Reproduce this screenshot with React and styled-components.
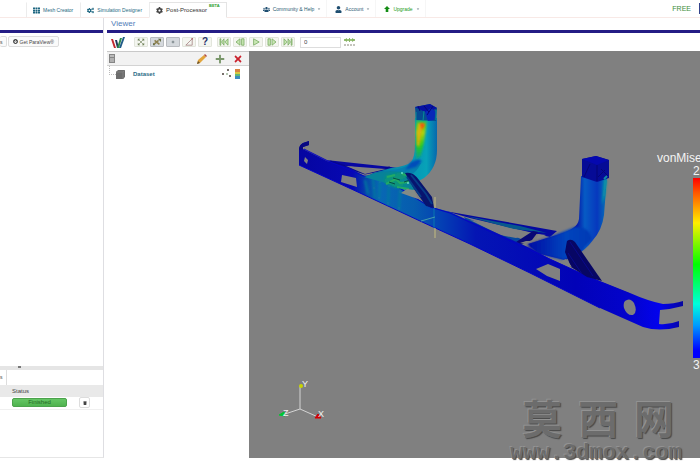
import React, { useState } from "react";
import styled, { createGlobalStyle } from "styled-components";
import {
  FaTh,
  FaCogs,
  FaCog,
  FaUsers,
  FaUser,
  FaArrowUp,
  FaCaretDown,
  FaArrowCircleDown,
  FaTrash,
  FaPlus,
  FaTimes,
} from "react-icons/fa";

const App = () => {
  return (
    <Page>
      <GlobalStyle />
      <Header />
      <Workspace>
        <Sidebar />
        <Viewer />
      </Workspace>
    </Page>
  );
};

export default App;

const Header = () => (
  <TopBar>
    <Tabs>
      <Tab href="#mesh">
        <FaTh /> Mesh Creator
      </Tab>
      <Tab href="#simulation">
        <FaCogs /> Simulation Designer
      </Tab>
      <Tab href="#post" $active>
        <FaCog /> Post-Processor
        <Beta>BETA</Beta>
      </Tab>
    </Tabs>
    <Menu>
      <MenuLink href="#community">
        <FaUsers /> Community & Help <Caret />
      </MenuLink>
      <MenuLink href="#account">
        <FaUser /> Account <Caret />
      </MenuLink>
      <MenuLink href="#upgrade" $green>
        <UpgradeIcon viewBox="0 0 7 7">
          <path d="M3.5 0L7 3.5H5V7H2V3.5H0z" />
        </UpgradeIcon>
        Upgrade <Caret />
      </MenuLink>
    </Menu>
    <Plan>FREE</Plan>
    <Avatar />
  </TopBar>
);

const Sidebar = () => (
  <Aside>
    <PanelTitle />
    <SideTools>
      <SideButton aria-label="Previous">s</SideButton>
      <SideButton>
        <FaArrowCircleDown /> Get ParaView®
      </SideButton>
    </SideTools>
    <Splitter>
      <SplitHandle />
    </Splitter>
    <JobTabs>
      <JobTab aria-label="Jobs">s</JobTab>
    </JobTabs>
    <JobTable>
      <thead>
        <tr>
          <th>Status</th>
          <th aria-label="Actions" />
        </tr>
      </thead>
      <tbody>
        <tr>
          <td>
            <Status>Finished</Status>
          </td>
          <td>
            <DeleteButton aria-label="Delete job">
              <FaTrash />
            </DeleteButton>
          </td>
        </tr>
      </tbody>
    </JobTable>
  </Aside>
);

const Viewer = () => {
  const [frame, setFrame] = useState("0");

  return (
    <Main>
      <PanelTitle>Viewer</PanelTitle>
      <Toolbar>
        <Logo viewBox="0 0 14 12">
          <path d="M0 2h2l3 9H3z" fill="#c22a30" />
          <path d="M4 3h2l2 8H6z" fill="#26365c" />
          <path d="M9 1h2L8 11H6z" fill="#2f8a4c" />
          <path d="M12 0h2l-4 11H8z" fill="#205c88" />
        </Logo>
        <ToolGroup>
          <Tool aria-label="Reset camera">
            <svg viewBox="0 0 12 10">
              <path d="M3 2l6 6M9 2L3 8" stroke="#8a9878" />
              <path
                d="M2 1h3L2 4zM10 1v3L7 1zM2 9V6l3 3zM10 9H7l3-3z"
                fill="#71825a"
              />
            </svg>
          </Tool>
          <Tool aria-label="Toggle rotation center" $pressed>
            <svg viewBox="0 0 12 10">
              <path
                d="M2 8l6-5M3 3l6 5"
                stroke="#8d8150"
                strokeWidth="2"
              />
              <path d="M7 1h4v4zM1 9V6l3 3z" fill="#687047" />
            </svg>
          </Tool>
          <Tool aria-label="Pick center" $pressed>
            <svg viewBox="0 0 12 10">
              <path d="M4 5h4M6 3v4" stroke="#969d9f" />
              <circle cx="6" cy="5" r="1" fill="#68747b" />
            </svg>
          </Tool>
          <Tool aria-label="Measure">
            <svg viewBox="0 0 12 10">
              <path d="M2 9l8-8v8z" fill="none" stroke="#a58183" />
              <path d="M9 0h2v2H9z" fill="#b06870" />
            </svg>
          </Tool>
          <Tool aria-label="Help">
            <HelpMark>?</HelpMark>
          </Tool>
        </ToolGroup>
        <ToolGroup>
          {playback.map(({ label, path }) => (
            <Tool aria-label={label} key={label}>
              <svg viewBox="0 0 12 10">
                <path d={path} fill="#c9e8b4" stroke="#79aa62" />
              </svg>
            </Tool>
          ))}
        </ToolGroup>
        <FrameInput
          aria-label="Frame"
          value={frame}
          onChange={(e) => setFrame(e.target.value)}
        />
        <Rescale viewBox="0 0 11 9">
          <path d="M0 2h11" stroke="#9cc47a" strokeWidth="2" />
          <path d="M0 2l3-2v4zM11 2L8 0v4zM5 0h1v4H5z" fill="#8ab568" />
          <path d="M0 7h11" stroke="#8a8a7a" strokeDasharray="2 1" />
        </Rescale>
      </Toolbar>
      <Content>
        <TreePanel>
          <TreeTools>
            <ServerIcon viewBox="0 0 6 9">
              <path d="M0 0h6v9H0z" fill="#858585" />
              <path d="M1 2h4" stroke="#eee" />
              <path d="M1 4h4v4H1z" fill="#b0b0b0" />
            </ServerIcon>
            <TreeButton aria-label="Edit">
              <svg viewBox="0 0 10 10">
                <path d="M0 10l1-4 6-5 2 2-6 6z" fill="#e2a53c" />
                <path d="M7 1l1-1 2 2-1 1z" fill="#b04a44" />
                <path d="M0 10l1-3 2 2z" fill="#66512f" />
              </svg>
            </TreeButton>
            <TreeButton aria-label="Add" $color="#79966a">
              <FaPlus />
            </TreeButton>
            <TreeButton aria-label="Remove" $color="#c9202c">
              <FaTimes />
            </TreeButton>
          </TreeTools>
          <TreeRow>
            <Branch />
            <DatasetIcon viewBox="0 0 9 9">
              <path d="M2 0h7v7L7 9H0V2z" fill="#6d6d6d" />
              <path d="M0 2h7v7M7 2l2-2" fill="none" stroke="#808080" />
            </DatasetIcon>
            <DatasetName>Dataset</DatasetName>
            <RowIcon viewBox="0 0 18 10">
              <g fill="#4a3f3a">
                <circle cx="1" cy="5" r="1" />
                <circle cx="6" cy="1" r="1" />
                <circle cx="8" cy="7" r="1" />
              </g>
              <circle cx="5" cy="5" r="1" fill="#9fb99a" />
              <path d="M13 0h5v3h-5z" fill="#d98442" />
              <path d="M13 3h5v2h-5z" fill="#d5ca42" />
              <path d="M13 5h5v2h-5z" fill="#62ba76" />
              <path d="M13 7h5v3h-5z" fill="#3c8dc0" />
            </RowIcon>
          </TreeRow>
        </TreePanel>
        <Viewport>
          <Model />
          <Legend>
            <LegendTitle>vonMises</LegendTitle>
            <span>2</span>
            <ColorBar />
            <span>3</span>
          </Legend>
          <Watermark>
            <WatermarkName>
              <span>莫</span>
              <span>西</span>
              <span>网</span>
            </WatermarkName>
            <WatermarkUrl>www.3dmox.com</WatermarkUrl>
          </Watermark>
        </Viewport>
      </Content>
    </Main>
  );
};

const playback = [
  { label: "First frame", path: "M1 1h1v8H1zM6 1v8L3 5zM11 1v8L7 5z" },
  { label: "Previous frame", path: "M6 1v8L1 5zM8 1h3v8H8z" },
  { label: "Play", path: "M3 1l7 4-7 4z" },
  { label: "Next frame", path: "M1 1h3v8H1zM6 1v8l5-4z" },
  { label: "Last frame", path: "M1 1v8l4-4zM6 1v8l3-4zM10 1h1v8h-1z" },
];

const Model = () => (
  <Scene viewBox="249 51 451 407" preserveAspectRatio="xMinYMin meet">
    <defs>
      <linearGradient id="beam" gradientUnits="userSpaceOnUse" x1="299" y1="0" x2="683" y2="0">
        <stop offset="0" stopColor="#0505a0" />
        <stop offset="0.14" stopColor="#0708b4" />
        <stop offset="0.18" stopColor="#064ba8" />
        <stop offset="0.21" stopColor="#0868b4" />
        <stop offset="0.3" stopColor="#065cae" />
        <stop offset="0.37" stopColor="#0440b4" />
        <stop offset="0.46" stopColor="#0415b4" />
        <stop offset="0.72" stopColor="#0202b8" />
        <stop offset="0.86" stopColor="#0303cc" />
        <stop offset="0.94" stopColor="#0202ee" />
        <stop offset="1" stopColor="#0606a0" />
      </linearGradient>
      <linearGradient id="tubeLeft" x1="0" y1="0" x2="1" y2="0">
        <stop offset="0" stopColor="#0647a8" />
        <stop offset="0.35" stopColor="#0788a5" />
        <stop offset="0.65" stopColor="#0795b4" />
        <stop offset="0.86" stopColor="#07a2b8" />
        <stop offset="1" stopColor="#0568ae" />
      </linearGradient>
      <linearGradient id="stress" x1="0" y1="0" x2="0" y2="1">
        <stop offset="0" stopColor="#08a690" />
        <stop offset="0.2" stopColor="#54d817" />
        <stop offset="0.35" stopColor="#b8cf06" />
        <stop offset="0.65" stopColor="#2bcc22" />
        <stop offset="1" stopColor="#07988c" />
      </linearGradient>
      <linearGradient id="tubeRight" gradientUnits="userSpaceOnUse" x1="577" y1="0" x2="608" y2="0">
        <stop offset="0" stopColor="#0618a8" />
        <stop offset="0.25" stopColor="#065bc4" />
        <stop offset="0.65" stopColor="#0638be" />
        <stop offset="1" stopColor="#067ab4" />
      </linearGradient>
      <linearGradient id="elbowRight" x1="0" y1="0" x2="1" y2="0">
        <stop offset="0" stopColor="#060aa4" />
        <stop offset="0.6" stopColor="#0545bd" />
        <stop offset="1" stopColor="#0538b4" />
      </linearGradient>
      <filter id="soft" x="-50%" y="-50%" width="200%" height="200%">
        <feGaussianBlur stdDeviation="1" />
      </filter>
    </defs>

    {/* left cross rods */}
    <path d="M326 160L391 167 403 169 390 172 340 165z" fill="#0808a2" />
    <path d="M330 162l35 11 25-5" fill="none" stroke="#06068e" strokeWidth="3" />
    <path d="M346 166l40 3-21 5z" fill="#808080" />

    {/* left tube */}
    <path
      d="M415 118L437 118 437 150Q437 168 424 178L408 187 395 190 362 180 373 173 391 168Q407 166 411 162 415 157 415 145z"
      fill="url(#tubeLeft)"
    />
    <path d="M411 163Q404 169 391 170L372 175 388 181Q414 180 421 163z" fill="#067fae" />
    <path d="M411 162l7-3 4 2-6 6-11 3z" fill="#054eba" filter="url(#soft)" />
    <path d="M416 118l11 2-3 22-3 14-5 4z" fill="url(#stress)" filter="url(#soft)" />
    <path d="M418 123l7 1-4 8-2 15-2-2z" fill="#e0ae08" filter="url(#soft)" />
    <path d="M420 123l5 1-3 6z" fill="#ef4809" filter="url(#soft)" />
    <path d="M415 107l15-3 7 4-1 13-20-1z" fill="#064b91" />
    <path d="M415 107l15-3 7 4-10 5z" fill="#0710a3" />
    <path d="M425 112l6-4 5 4-2 8-6 1z" fill="#0828b8" />
    <path d="M416 112v8M424 111l-1 10M436 110v10" stroke="#078c96" />
    <path d="M418 106l2 5M424 106l5 6M433 106l-6 9" stroke="#050875" />

    {/* rods between the two supports */}
    <path d="M445 211L557 231 550 237 470 218z" fill="#0508a0" />
    <path d="M466 216l54 10 27 7-33-4z" fill="#07588c" />
    <path d="M464 217l50 19 14 6-10 4-50-22z" fill="#06489e" />
    <path d="M470 220l62 13-16 5-16-3z" fill="#808080" />
    <path d="M516 242l17-11 5 1-6 8-12 5z" fill="#080775" />
    <path d="M538 234l8 1-9 4z" fill="#858585" />
    <path d="M520 243l6-2 5 0-6 3z" fill="#808080" />

    {/* right tube */}
    <path d="M581 176h26l-3 39Q602 230 593 240 583 254 565 260L540 254 528 244 550 237Q568 232 573 228 578 225 579 219z" fill="url(#tubeRight)" />
    <path d="M575 227Q589 226 592 239L582 250 564 260 536 253 527 245 550 237z" fill="url(#elbowRight)" filter="url(#soft)" />
    <path d="M604 179l3 1-2 16-3 9z" fill="#089aa2" filter="url(#soft)" />
    <path d="M582 159l14-3 13 4v18l-12 4-15-5z" fill="#060b96" />
    <path d="M582 159l14-3 13 4-12 5z" fill="#0508af" />
    <path d="M597 165v16M590 164l-6 13M601 169l7 7M598 177l7-7" stroke="#050575" />
    <path d="M604 179l3-3" stroke="#118aa5" strokeWidth="2" />

    {/* main beam with its two hooked ends */}
    <path
      fill="url(#beam)"
      fillRule="evenodd"
      d="M299 165V150Q299 145 303 143L309 141V145L303 147 303 149 327 161 350 168 364 176 374 174 390 180 418 199 432 207 450 212 490 230 530 248 550 259 572 269 600 281 630 293Q648 301 663 304 674 304 683 301V306Q672 309 660 310L659 324Q669 325 679 321V327Q659 332 643 327L600 308 562 289 530 273 470 244 420 221 360 193z
      M342 175L356 178 357 187 341 182z
      M305 157L308 160 307 164 304 161z
      M536 269L548 264 560 269 560 281 547 276z
      M625 301Q630 297 634 303 638 312 633 315 627 316 624 308 623 303 625 301z"
    />
    <path d="M304 149l24 12 36 15 24 5 42 26 20 6 80 37 70 32 30 12" fill="none" stroke="#0505c4" />
    <path d="M299 165l61 28 60 28 50 23 60 29 70 35" fill="none" stroke="#0404c8" />
    <path d="M299 150q0-5 4-7l6-2v4l-6 2v2z" fill="#070781" />

    {/* stress patches round the left bracket */}
    <path d="M365 180l3 14M373 178l2 20M380 181l-1 18M389 184l-1 21M400 190l-1 20" stroke="#08799f" strokeWidth="2" filter="url(#soft)" />
    <path d="M364 177l11-4 15-2 21 2 7 11-6 8-23-8z" fill="#078299" />
    <path d="M386 175l16-3 6 5-10 4 9 4-12 3-11-6z" fill="#07947c" filter="url(#soft)" />
    <path d="M387 177l8-2M386 184l10-5 4 4 9-1M397 187l12 2M402 174l8 2" stroke="#22aa65" strokeWidth="2" fill="none" />
    <path d="M393 178l7 2M389 182l6 2M404 182l6-2" stroke="#064c46" />
    <circle cx="402" cy="173" r="1" fill="#65dcc7" />
    <circle cx="408" cy="183" r="1" fill="#6bd5c8" />
    <path d="M401 193l6-4 7 1 4 9-6-2z" fill="#838b86" />
    <path d="M405 173q8-2 14 7l13 17 2 11-8-2-12-17z" fill="#07146f" />
    <path d="M411 175l15 19 6 10M407 177l14 20" stroke="#073b88" strokeWidth="2" fill="none" />

    {/* right strut */}
    <path d="M567 241q4-3 8 1l27 39-15-4-16-10-6-15z" fill="#070664" />
    <path d="M570 242l23 34M568 253l14 21" stroke="#0a0a8b" />
    <path d="M561 261l5-2 6 8z" fill="#808080" />

    {/* rotation centre marker */}
    <path d="M435 197v11M435 228v10" stroke="#c3bc80" />
    <path d="M434 208v20" stroke="#0876b0" />
    <path d="M421 221l14-4" stroke="#459dab" />

    {/* orientation axes */}
    <path d="M300 409v-23M300 409l-18 6M300 409l18 8" stroke="#d3d3d3" />
    <circle cx="301" cy="386" r="2" fill="#c8d500" />
    <path d="M279 415l5-3 1 4z" fill="#00c72e" stroke="#00c72e" />
    <path d="M315 418l3-4 3 4z" fill="#d00000" stroke="#d00000" />
    <AxisLabel x="302" y="387">Y</AxisLabel>
    <AxisLabel x="283" y="416">Z</AxisLabel>
    <AxisLabel x="318" y="417">X</AxisLabel>
  </Scene>
);

const GlobalStyle = createGlobalStyle`
  * {
    box-sizing: border-box;
  }
  body {
    margin: 0;
    background: #fff;
    color: #444;
    font-family: "Liberation Sans", Arial, sans-serif;
    font-size: 6px;
    line-height: 8px;
  }
  button,
  input {
    margin: 0;
    padding: 0;
    font: inherit;
    color: inherit;
  }
  svg {
    display: block;
    flex: none;
  }
`;
const Page = styled.div`
  min-height: 100vh;
  padding-bottom: 7px;
  display: flex;
  flex-direction: column;
  overflow: hidden;
`;
const TopBar = styled.header`
  height: 18px;
  flex: none;
  display: flex;
  align-items: stretch;
  border-bottom: 1px solid #f8e9e6;
`;
const Tabs = styled.nav`
  padding: 2px 0 0 26px;
  display: flex;
`;
const Tab = styled.a`
  margin-bottom: -1px;
  padding: 0 6px;
  display: flex;
  align-items: center;
  gap: 3px;
  color: ${({ $active }) => ($active ? "#333" : "#1f6a82")};
  border: 1px solid ${({ $active }) => ($active ? "#e4e4e4" : "transparent")};
  border-left-color: #ececec;
  border-bottom-color: ${({ $active }) => ($active ? "#fff" : "transparent")};
  background: ${({ $active }) => ($active ? "#fff" : "transparent")};
  font-size: ${({ $active }) => ($active ? "6px" : "5px")};
  text-decoration: none;
  white-space: nowrap;
  svg {
    width: 7px;
    height: 7px;
    fill: ${({ $active }) => ($active ? "#444" : "#1d6680")};
  }
`;
const Beta = styled.sup`
  margin-left: -1px;
  align-self: flex-start;
  color: #2ca02c;
  font-size: 4px;
  font-weight: bold;
  line-height: 6px;
`;
const Menu = styled.nav`
  margin-left: 28px;
  display: flex;
`;
const MenuLink = styled.a`
  padding: 1px 5px 0 8px;
  display: flex;
  align-items: center;
  gap: 3px;
  border-right: 1px solid #f6f6f6;
  color: ${({ $green }) => ($green ? "#1c9b1c" : "#2c5b74")};
  font-size: 5px;
  text-decoration: none;
  white-space: nowrap;
  svg {
    width: 7px;
    height: 7px;
    fill: ${({ $green }) => ($green ? "#148c14" : "#1f4e70")};
  }
`;
const UpgradeIcon = styled.svg`
  && {
    width: 6px;
    height: 6px;
  }
`;
const Caret = styled(FaCaretDown)`
  && {
    width: 4px;
    height: 4px;
    fill: #71838c;
  }
`;
const Plan = styled.span`
  margin-left: auto;
  padding-right: 8px;
  align-self: center;
  color: #3b8d3b;
  font-size: 7px;
`;
const Avatar = styled.span`
  width: 1px;
  margin: 3px 0;
  background: #34438c;
`;
const Workspace = styled.div`
  flex: 1;
  display: flex;
`;
const Aside = styled.aside`
  width: 104px;
  flex: none;
  display: flex;
  flex-direction: column;
  border-right: 1px solid #dedee2;
  border-bottom: 1px solid #e6e6e6;
`;
const PanelTitle = styled.h2`
  margin: 0;
  height: 15px;
  padding-left: 4px;
  border-bottom: 3px solid #241c85;
  color: #4f7cb8;
  font-size: 8px;
  font-weight: normal;
  line-height: 12px;
`;
const SideTools = styled.div`
  padding-top: 3px;
  flex: 1;
  display: flex;
  align-items: flex-start;
  gap: 1px;
`;
const SideButton = styled.button`
  height: 11px;
  padding: 0 4px;
  display: flex;
  align-items: center;
  gap: 2px;
  border: 1px solid #ddd;
  border-radius: 2px;
  background: #fafafa;
  font-size: 5px;
  white-space: nowrap;
  svg {
    width: 5px;
    height: 5px;
  }
  &:first-child {
    padding: 0 3px 0 0;
    border-left: 0;
  }
`;
const Splitter = styled.div`
  height: 4px;
  padding-left: 18px;
  background: #e5e5e5;
`;
const SplitHandle = styled.div`
  width: 3px;
  height: 2px;
  background: #777;
`;
const JobTabs = styled.div`
  height: 15px;
  display: flex;
`;
const JobTab = styled.button`
  width: 7px;
  border: 0;
  border-right: 1px solid #ddd;
  background: #fff;
  font-size: 5px;
  text-align: left;
`;
const JobTable = styled.table`
  width: 100%;
  margin-bottom: 47px;
  border-collapse: collapse;
  th {
    height: 12px;
    padding: 0 0 0 12px;
    background: #e9e9e9;
    font-weight: normal;
    text-align: left;
  }
  td {
    height: 13px;
    padding: 0 0 0 12px;
    border-bottom: 1px solid #f0f0f0;
  }
  th:first-child {
    width: 67px;
  }
`;
const Status = styled.div`
  height: 9px;
  border: 1px solid #4ca34c;
  border-radius: 2px;
  background: linear-gradient(#65c665, #4fb34f);
  color: #246924;
  line-height: 7px;
  text-align: center;
`;
const DeleteButton = styled.button`
  width: 11px;
  height: 11px;
  display: flex;
  justify-content: center;
  align-items: center;
  border: 1px solid #ddd;
  border-radius: 2px;
  background: #fff;
  svg {
    width: 4px;
    height: 4px;
  }
`;
const Main = styled.main`
  margin-left: 3px;
  flex: 1;
  min-width: 0;
  display: flex;
  flex-direction: column;
`;
const Toolbar = styled.div`
  height: 18px;
  padding: 0 4px;
  display: flex;
  align-items: center;
`;
const Logo = styled.svg`
  width: 14px;
  height: 12px;
  margin: 2px 9px 0 0;
`;
const ToolGroup = styled.div`
  margin-right: 5px;
  display: flex;
  gap: 2px;
`;
const Tool = styled.button`
  width: 14px;
  height: 10px;
  display: flex;
  justify-content: center;
  align-items: center;
  border: 1px solid ${({ $pressed }) => ($pressed ? "#b9bcc0" : "#e2e5dc")};
  border-radius: 1px;
  background: ${({ $pressed }) => ($pressed ? "#d5d9dd" : "#f4f6f0")};
  svg {
    width: 12px;
    height: 8px;
  }
`;
const HelpMark = styled.span`
  color: #1f2f68;
  font-size: 10px;
  font-weight: bold;
`;
const FrameInput = styled.input`
  width: 41px;
  height: 11px;
  padding: 0 3px;
  border: 1px solid #ddd;
  background: #fff;
`;
const Rescale = styled.svg`
  width: 11px;
  height: 9px;
  margin-left: 3px;
`;
const Content = styled.div`
  flex: 1;
  display: flex;
`;
const TreePanel = styled.section`
  width: 142px;
  flex: none;
`;
const TreeTools = styled.div`
  height: 15px;
  padding: 0 6px 0 2px;
  display: flex;
  align-items: center;
  gap: 8px;
  border-top: 1px solid #c9c9c9;
  border-bottom: 1px solid #d3d3d3;
  background: #f2f2f2;
`;
const ServerIcon = styled.svg`
  width: 6px;
  height: 9px;
  margin-right: auto;
`;
const TreeButton = styled.button`
  border: 0;
  background: none;
  color: ${({ $color }) => $color};
  svg {
    width: 10px;
    height: 10px;
  }
`;
const TreeRow = styled.div`
  height: 16px;
  padding: 0 9px 0 2px;
  display: flex;
  align-items: center;
`;
const Branch = styled.span`
  width: 7px;
  height: 9px;
  align-self: flex-start;
  border-left: 1px dotted #bbb;
  border-bottom: 1px dotted #bbb;
`;
const DatasetIcon = styled.svg`
  width: 9px;
  height: 9px;
`;
const DatasetName = styled.span`
  margin: 0 auto 0 8px;
  color: #2c6c86;
  font-weight: bold;
`;
const RowIcon = styled.svg`
  width: 18px;
  height: 10px;
`;
const Viewport = styled.section`
  flex: 1;
  min-width: 0;
  position: relative;
  background: #808080;
`;
const Scene = styled.svg`
  width: 100%;
`;
const AxisLabel = styled.text`
  fill: #f2f2f2;
  font-size: 9px;
`;
/* the legend runs past the right edge of the viewport */
const Legend = styled.div`
  position: absolute;
  top: 101px;
  right: -9px;
  width: 52px;
  display: flex;
  flex-direction: column;
  align-items: flex-start;
  padding-left: 36px;
  color: #f4f4f4;
  font-size: 12px;
  line-height: 13px;
`;
const LegendTitle = styled.span`
  margin-left: -36px;
`;
const ColorBar = styled.div`
  width: 16px;
  height: 180px;
  margin-bottom: 1px;
  background: linear-gradient(
    #f00,
    #f50 8%,
    #fe0 25%,
    #0f0 48%,
    #0fd 70%,
    #09f 82%,
    #00f 96%
  );
`;
const Watermark = styled.div`
  position: absolute;
  right: 18px;
  bottom: -7px;
  display: flex;
  flex-direction: column;
  gap: 3px;
  color: #6c6c6c;
  text-shadow: -1px -1px 0 #929292, 1px 1px 1px #484848;
`;
const WatermarkName = styled.div`
  padding: 0 8px 0 12px;
  display: flex;
  justify-content: space-between;
  font-family: "Liberation Sans", "Noto Sans CJK SC", sans-serif;
  font-size: 40px;
  font-weight: bold;
  line-height: 40px;
`;
const WatermarkUrl = styled.div`
  font-family: "Liberation Mono", monospace;
  font-size: 22px;
  font-weight: bold;
  line-height: 22px;
`;
